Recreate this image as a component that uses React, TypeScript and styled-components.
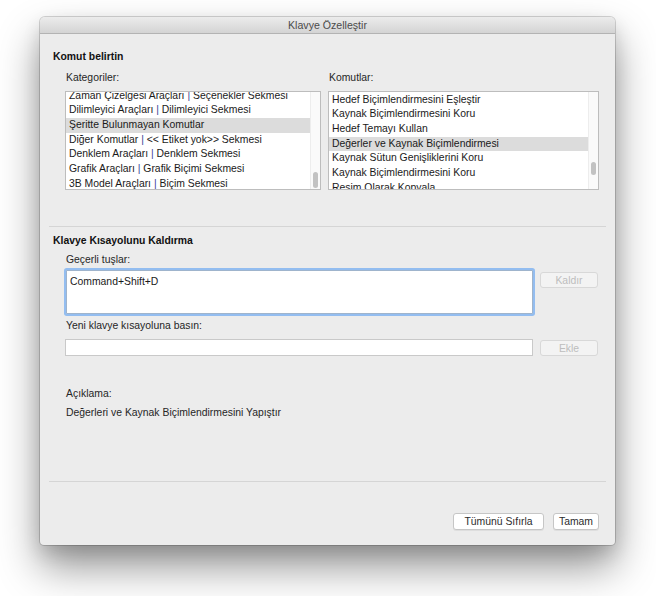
import React from "react";
import styled, { createGlobalStyle } from "styled-components";

const GlobalStyle = createGlobalStyle`
  html, body {
    margin: 0;
    padding: 0;
    background: #ffffff;
  }
  body {
    font-family: "Liberation Sans", Arial, sans-serif;
    font-size: 10.4px;
    color: #1e1e1e;
  }
`;

const categories = [
  "Zaman Çizelgesi Araçları | Seçenekler Sekmesi",
  "Dilimleyici Araçları | Dilimleyici Sekmesi",
  "Şeritte Bulunmayan Komutlar",
  "Diğer Komutlar | << Etiket yok>> Sekmesi",
  "Denklem Araçları | Denklem Sekmesi",
  "Grafik Araçları | Grafik Biçimi Sekmesi",
  "3B Model Araçları | Biçim Sekmesi",
];

const commands = [
  "Hedef Biçimlendirmesini Eşleştir",
  "Kaynak Biçimlendirmesini Koru",
  "Hedef Temayı Kullan",
  "Değerler ve Kaynak Biçimlendirmesi",
  "Kaynak Sütun Genişliklerini Koru",
  "Kaynak Biçimlendirmesini Koru",
  "Resim Olarak Kopyala",
];

// split "A | B" so the bar can get its own colour
const renderLabel = (text: string) => {
  const parts = text.split(" | ");
  if (parts.length < 2) return text;
  return (
    <>
      {parts[0]} <Pipe>|</Pipe> {parts[1]}
    </>
  );
};

type ListProps = {
  items: string[];
  selected: number;
  offset: number;
  thumbTop: number;
  thumbHeight: number;
};

const ListBox: React.FC<ListProps> = ({ items, selected, offset, thumbTop, thumbHeight }) => (
  <List>
    <Rows $offset={offset}>
      {items.map((it, i) => (
        <Row key={i} $active={i === selected}>
          {renderLabel(it)}
        </Row>
      ))}
    </Rows>
    <Track>
      <Thumb style={{ top: thumbTop, height: thumbHeight }} />
    </Track>
  </List>
);

const App: React.FC = () => {
  return (
    <Page>
      <GlobalStyle />
      <Window>
        <TitleBar>Klavye Özelleştir</TitleBar>
        <Body>
          <Section>
            <SectionTitle>Komut belirtin</SectionTitle>
            <Columns>
              <Column>
                <Label>Kategoriler:</Label>
                <ListBox items={categories} selected={2} offset={-3.4} thumbTop={80} thumbHeight={16} />
              </Column>
              <Column>
                <Label>Komutlar:</Label>
                <ListBox items={commands} selected={3} offset={0.7} thumbTop={70} thumbHeight={13} />
              </Column>
            </Columns>
          </Section>

          <Divider />

          <Section>
            <SectionTitle $tight>Klavye Kısayolunu Kaldırma</SectionTitle>
            <Indent>
              <Label $gap={5}>Geçerli tuşlar:</Label>
              <FieldRow $gap={3}>
                <KeysBox>Command+Shift+D</KeysBox>
                <SmallButton disabled $top={2}>Kaldır</SmallButton>
              </FieldRow>
              <Label $gap={5}>Yeni klavye kısayoluna basın:</Label>
              <FieldRow $gap={6}>
                <TextField />
                <SmallButton disabled $top={1}>Ekle</SmallButton>
              </FieldRow>
              <Label $gap={31}>Açıklama:</Label>
              <Label $gap={5}>Değerleri ve Kaynak Biçimlendirmesini Yapıştır</Label>
            </Indent>
          </Section>

          <Spacer />
          <Divider />

          <Footer>
            <PushButton $w={91}>Tümünü Sıfırla</PushButton>
            <PushButton $w={46}>Tamam</PushButton>
          </Footer>
        </Body>
      </Window>
    </Page>
  );
};

export default App;

const Page = styled.div`
  width: 656px;
  height: 596px;
  padding: 17px 0 0 40px;
  box-sizing: border-box;
  overflow: hidden;
`;

const Window = styled.div`
  width: 575px;
  height: 528px;
  display: flex;
  flex-direction: column;
  background: #ececec;
  border-radius: 5px 5px 4px 4px;
  box-shadow: 0 0 0 1px rgba(0, 0, 0, 0.16), 0 22px 42px rgba(0, 0, 0, 0.42),
    0 8px 18px rgba(0, 0, 0, 0.12);
  overflow: hidden;
`;

const TitleBar = styled.div`
  height: 16px;
  flex-shrink: 0;
  display: flex;
  align-items: center;
  justify-content: center;
  font-size: 10.6px;
  color: #4b4b4b;
  background: linear-gradient(#ececec, #d4d4d4);
  border-bottom: 1px solid #b3b3b3;
`;

const Body = styled.div`
  flex: 1;
  display: flex;
  flex-direction: column;
  padding: 0 9px;
`;

const Section = styled.div`
  display: flex;
  flex-direction: column;
  padding-left: 4px;
  padding-bottom: 36px;
  &:nth-of-type(3) {
    padding-bottom: 0;
  }
`;

const SectionTitle = styled.div<{ $tight?: boolean }>`
  margin-top: ${(p) => (p.$tight ? 7 : 16)}px;
  font-weight: bold;
  line-height: 14px;
  color: #111;
`;

const Columns = styled.div`
  display: grid;
  grid-template-columns: 256px 271px;
  column-gap: 7px;
  margin: 7px 0 0 12px;
`;

const Column = styled.div`
  display: flex;
  flex-direction: column;
`;

const Label = styled.div<{ $gap?: number }>`
  margin-top: ${(p) => p.$gap ?? 0}px;
  padding-left: 1px;
  line-height: 14px;
  color: #262626;
`;

const List = styled.div`
  margin-top: 6px;
  height: 99px;
  box-sizing: border-box;
  display: flex;
  background: #fff;
  border: 1px solid #bdbdbd;
  overflow: hidden;
`;

const Rows = styled.div<{ $offset: number }>`
  flex: 1;
  margin-top: ${(p) => p.$offset}px;
`;

const Row = styled.div<{ $active: boolean }>`
  height: 14.67px;
  line-height: 14.67px;
  padding-left: 3px;
  white-space: nowrap;
  color: #1a1a1a;
  background: ${(p) => (p.$active ? "#dcdcdc" : "transparent")};
`;

const Pipe = styled.span`
  color: #3b4597;
`;

const Track = styled.div`
  position: relative;
  width: 9px;
  flex-shrink: 0;
  background: #fafafa;
  border-left: 1px solid #ededed;
`;

const Thumb = styled.div`
  position: absolute;
  left: 2px;
  width: 5px;
  border-radius: 3px;
  background: #c2c2c2;
`;

const Divider = styled.div`
  height: 1px;
  flex-shrink: 0;
  background: #d5d5d5;
`;

const Indent = styled.div`
  display: flex;
  flex-direction: column;
  margin-left: 12px;
  margin-right: 8px;
`;

const FieldRow = styled.div<{ $gap: number }>`
  display: grid;
  grid-template-columns: 1fr 58px;
  column-gap: 6px;
  align-items: start;
  margin-top: ${(p) => p.$gap}px;
`;

const KeysBox = styled.div`
  height: 44px;
  box-sizing: border-box;
  margin: 0 1px;
  padding: 4px 3px;
  line-height: 13px;
  background: #fff;
  border: 1px solid #9fb4cc;
  box-shadow: 0 0 0 2px #93bdf0;
  border-radius: 1px;
  color: #1a1a1a;
`;

const TextField = styled.div`
  height: 17px;
  box-sizing: border-box;
  margin-right: 1px;
  background: #fff;
  border: 1px solid #c9c9c9;
`;

const SmallButton = styled.button<{ $top: number }>`
  margin-top: ${(p) => p.$top}px;
  height: 16px;
  padding: 0;
  font-family: "Liberation Sans", Arial, sans-serif;
  font-size: 10.4px;
  color: #bdbdbd;
  background: #f3f3f3;
  border: 1px solid #d8d8d8;
  border-radius: 3px;
`;

const Spacer = styled.div`
  flex: 1;
`;

const Footer = styled.div`
  display: flex;
  justify-content: flex-end;
  gap: 9px;
  padding: 31px 7px 15px 0;
`;

const PushButton = styled.button<{ $w: number }>`
  width: ${(p) => p.$w}px;
  height: 17px;
  padding: 0;
  font-family: "Liberation Sans", Arial, sans-serif;
  font-size: 10.4px;
  color: #2c2c2c;
  background: #fff;
  border: 1px solid #c6c6c6;
  border-radius: 3px;
  box-shadow: 0 1px 0 rgba(0, 0, 0, 0.06);
`;
